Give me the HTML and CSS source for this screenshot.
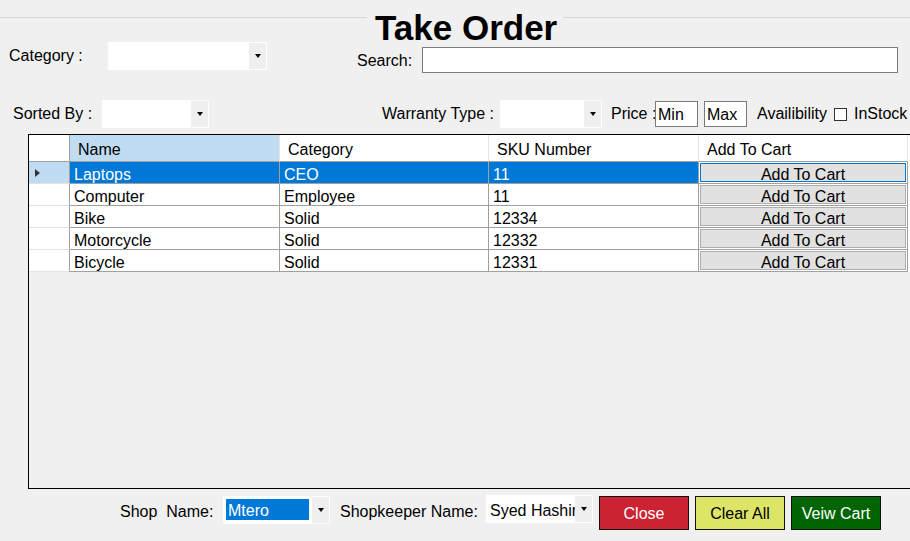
FILE: index.html
```html
<!DOCTYPE html>
<html>
<head>
<meta charset="utf-8">
<title>Take Order</title>
<link rel="stylesheet" href="styles.css">
</head>
<body>
<div class="form">
  <div class="header">
    <div class="hline hline-left"></div>
    <div class="title">Take Order</div>
    <div class="hline hline-right"></div>
  </div>

  <div class="row1">
    <div class="lbl lbl-category">Category :</div>
    <div class="combo combo-category"><div class="combo-text"></div><div class="combo-btn"><span class="arrow"></span></div></div>
    <div class="lbl lbl-search">Search:</div>
    <div class="textbox search-box"></div>
  </div>

  <div class="row2">
    <div class="lbl lbl-sorted">Sorted By :</div>
    <div class="combo combo-sorted"><div class="combo-text"></div><div class="combo-btn"><span class="arrow"></span></div></div>
    <div class="lbl lbl-warranty">Warranty Type :</div>
    <div class="combo combo-warranty"><div class="combo-text"></div><div class="combo-btn"><span class="arrow"></span></div></div>
    <div class="lbl lbl-price">Price :</div>
    <div class="textbox small-box">Min</div>
    <div class="textbox small-box box-max">Max</div>
    <div class="lbl lbl-avail">Availibility</div>
    <div class="checkbox"></div>
    <div class="lbl lbl-instock">InStock</div>
  </div>

  <div class="grid-panel">
    <div class="dg-row dg-head">
      <div class="cell rh-corner"></div>
      <div class="cell hcell hcell-active">Name</div>
      <div class="cell hcell">Category</div>
      <div class="cell hcell">SKU Number</div>
      <div class="cell hcell">Add To Cart</div>
    </div>
    <div class="dg-row selected">
      <div class="cell rh rh-selected"><span class="row-arrow"></span></div>
      <div class="cell">Laptops</div>
      <div class="cell">CEO</div>
      <div class="cell">11</div>
      <div class="cell btn-cell"><div class="cart-btn">Add To Cart</div></div>
    </div>
    <div class="dg-row">
      <div class="cell rh"></div>
      <div class="cell">Computer</div>
      <div class="cell">Employee</div>
      <div class="cell">11</div>
      <div class="cell btn-cell"><div class="cart-btn">Add To Cart</div></div>
    </div>
    <div class="dg-row">
      <div class="cell rh"></div>
      <div class="cell">Bike</div>
      <div class="cell">Solid</div>
      <div class="cell">12334</div>
      <div class="cell btn-cell"><div class="cart-btn">Add To Cart</div></div>
    </div>
    <div class="dg-row">
      <div class="cell rh"></div>
      <div class="cell">Motorcycle</div>
      <div class="cell">Solid</div>
      <div class="cell">12332</div>
      <div class="cell btn-cell"><div class="cart-btn">Add To Cart</div></div>
    </div>
    <div class="dg-row">
      <div class="cell rh"></div>
      <div class="cell">Bicycle</div>
      <div class="cell">Solid</div>
      <div class="cell">12331</div>
      <div class="cell btn-cell"><div class="cart-btn">Add To Cart</div></div>
    </div>
  </div>

  <div class="bottom">
    <div class="lbl lbl-shop">Shop&nbsp; Name:</div>
    <div class="combo combo-shop"><div class="combo-text"><span class="sel-text">Mtero</span></div><div class="combo-btn"><span class="arrow"></span></div></div>
    <div class="lbl lbl-keeper">Shopkeeper Name:</div>
    <div class="combo combo-keeper"><div class="combo-text">Syed Hashim</div><div class="combo-btn"><span class="arrow"></span></div></div>
    <div class="btn btn-close">Close</div>
    <div class="btn btn-clear">Clear All</div>
    <div class="btn btn-view">Veiw Cart</div>
  </div>
</div>
</body>
</html>
```

FILE: styles.css
```css
* { box-sizing: border-box; }

html, body {
  margin: 0;
  padding: 0;
}

body {
  background: #f0f0f0;
  font-family: "Liberation Sans", Arial, sans-serif;
  font-size: 16px;
  color: #000;
  width: 910px;
  height: 541px;
  overflow: hidden;
}

.form {
  width: 910px;
  height: 541px;
}

/* header */
.header {
  display: flex;
  align-items: flex-start;
  height: 40px;
}
.hline {
  height: 1px;
  background: #d7d7d7;
  margin-top: 17px;
}
.hline-left { width: 367px; }
.hline-right { flex: 1; }
.title {
  font-size: 35px;
  font-weight: bold;
  line-height: 36px;
  margin-top: 10px;
  padding: 0 6px 0 8px;
  letter-spacing: 0;
  white-space: nowrap;
}

/* generic controls */
.lbl {
  line-height: 18px;
  white-space: nowrap;
  flex: none;
}

.combo {
  display: flex;
  background: #fff;
  border: 1px solid #fff;
  height: 28px;
  flex: none;
}
.combo-text {
  flex: 1;
  overflow: hidden;
  white-space: nowrap;
  padding: 3px 0 0 3px;
  line-height: 21px;
}
.combo-btn {
  width: 17px;
  background: #efefef;
  display: flex;
  align-items: center;
  justify-content: center;
}
.arrow {
  width: 0;
  height: 0;
  border-left: 3.5px solid transparent;
  border-right: 3.5px solid transparent;
  border-top: 4px solid #000;
}

.textbox {
  background: #fff;
  border: 1px solid #7a7a7a;
  flex: none;
}

/* row 1 */
.row1 {
  display: flex;
  align-items: flex-start;
  height: 35px;
  padding-left: 9px;
}
.lbl-category {
  width: 99px;
  margin-top: 7px;
}
.combo-category {
  width: 159px;
  margin-top: 2px;
}
.lbl-search {
  width: 65px;
  margin-left: 90px;
  margin-top: 12px;
}
.search-box {
  width: 476px;
  height: 26px;
  margin-top: 7px;
}

/* row 2 */
.row2 {
  display: flex;
  align-items: flex-start;
  height: 59px;
  padding-left: 13px;
}
.row2 .lbl { margin-top: 30px; }
.lbl-sorted { width: 89px; }
.combo-sorted { width: 107px; margin-top: 25px; }
.lbl-warranty { width: 118px; margin-left: 173px; }
.combo-warranty { width: 102px; margin-top: 25px; }
.lbl-price { width: 44px; margin-left: 9px; }
.small-box {
  width: 43px;
  height: 26px;
  margin-top: 26px;
  padding-left: 2px;
  line-height: 25px;
}
.box-max { margin-left: 6px; }
.lbl-avail { width: 77px; margin-left: 10px; }
.checkbox {
  width: 13px;
  height: 13px;
  border: 1px solid #333;
  background: #fff;
  margin-top: 33px;
  flex: none;
}
.lbl-instock { margin-left: 7px; }

/* data grid */
.grid-panel {
  margin-left: 28px;
  width: 882px;
  height: 355px;
  border: 1px solid #000;
  border-right: none;
  background: #f0f0f0;
}
.dg-row {
  display: grid;
  grid-template-columns: 41px 210px 209px 210px 209px;
  background: #fff;
}
.cell {
  height: 22px;
  line-height: 22px;
  padding-top: 2px;
  padding-left: 4px;
  border-right: 1px solid #a0a0a0;
  border-bottom: 1px solid #a0a0a0;
  white-space: nowrap;
  overflow: hidden;
}
.dg-head .cell {
  height: 27px;
  line-height: 28px;
  padding-top: 1px;
  padding-left: 8px;
  border-right-color: #e4e4e4;
}
.dg-head .rh-corner { border-right-color: #a0a0a0; }
.hcell-active { background: #bfdcf3; }

.rh {
  border-bottom-color: #e2e2e2;
  position: relative;
}
.rh-selected { background: #bfdcf3; }
.row-arrow {
  position: absolute;
  left: 6px;
  top: 7px;
  width: 0;
  height: 0;
  border-top: 4px solid transparent;
  border-bottom: 4px solid transparent;
  border-left: 5px solid #333;
}

.selected .cell:not(.rh):not(.btn-cell) {
  background: #0078d7;
  color: #fff;
}

.cell.btn-cell {
  padding: 1px;
}
.cart-btn {
  height: 19px;
  background: #e1e1e1;
  border: 1px solid #adadad;
  text-align: center;
  line-height: 22px;
  overflow: hidden;
}
.selected .cart-btn {
  border-color: #0078d7;
}

/* bottom */
.bottom {
  display: flex;
  align-items: flex-start;
  height: 52px;
  padding-left: 120px;
}
.bottom .lbl { margin-top: 14px; }
.lbl-shop { width: 103px; }
.combo-shop {
  width: 107px;
  margin-top: 7px;
}
.combo-shop .combo-text { padding: 2px 3px 2px 2px; line-height: 20px; }
.sel-text {
  display: block;
  background: #0078d7;
  color: #fff;
  height: 21px;
  line-height: 23px;
  padding-left: 2px;
}
.lbl-keeper { width: 146px; margin-left: 10px; }
.combo-keeper {
  width: 107px;
  margin-top: 6px;
}
.combo-keeper .combo-text { padding-left: 3px; padding-top: 4px; }

.btn {
  width: 90px;
  height: 34px;
  border: 1px solid #111;
  text-align: center;
  line-height: 34px;
  margin-top: 7px;
  flex: none;
}
.btn-close { background: #cc2333; color: #fff; margin-left: 6px; }
.btn-clear { background: #dce566; color: #000; margin-left: 6px; }
.btn-view { background: #006400; color: #fff; margin-left: 6px; }
```
